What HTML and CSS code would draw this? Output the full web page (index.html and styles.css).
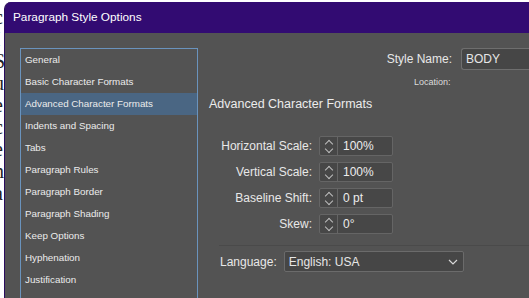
FILE: index.html
```html
<!DOCTYPE html>
<html lang="en">
<head>
    <meta charset="UTF-8">
    <title>Paragraph Style Options</title>
    <link rel="stylesheet" href="styles.css">
</head>
<body>
    <div class="doc">
        <p>c</p><p>I</p><p>S</p><p>u</p><p>e</p><p>c</p><p>e</p><p>n</p><p>a</p>
    </div>

    <div class="dialog">
        <div class="titlebar">Paragraph Style Options</div>

        <div class="dialog-body">
            <ul class="nav-list">
                <li>General</li>
                <li>Basic Character Formats</li>
                <li class="active">Advanced Character Formats</li>
                <li>Indents and Spacing</li>
                <li>Tabs</li>
                <li>Paragraph Rules</li>
                <li>Paragraph Border</li>
                <li>Paragraph Shading</li>
                <li>Keep Options</li>
                <li>Hyphenation</li>
                <li>Justification</li>
                <li>Span Columns</li>
            </ul>

            <div class="panel">
                <div class="name-row">
                    <span class="label">Style Name:</span>
                    <div class="text-input">BODY</div>
                </div>
                <div class="location">Location:</div>
                <h2 class="panel-title">Advanced Character Formats</h2>

                <div class="fields">
                    <div class="field-row">
                        <span class="label">Horizontal Scale:</span>
                        <div class="spin-input">
                            <span class="spin"><i class="up"></i><i class="down"></i></span>
                            <span class="value">100%</span>
                        </div>
                    </div>
                    <div class="field-row">
                        <span class="label">Vertical Scale:</span>
                        <div class="spin-input">
                            <span class="spin"><i class="up"></i><i class="down"></i></span>
                            <span class="value">100%</span>
                        </div>
                    </div>
                    <div class="field-row">
                        <span class="label">Baseline Shift:</span>
                        <div class="spin-input">
                            <span class="spin"><i class="up"></i><i class="down"></i></span>
                            <span class="value">0 pt</span>
                        </div>
                    </div>
                    <div class="field-row">
                        <span class="label">Skew:</span>
                        <div class="spin-input">
                            <span class="spin"><i class="up"></i><i class="down"></i></span>
                            <span class="value">0°</span>
                        </div>
                    </div>
                </div>

                <div class="language-row">
                    <span class="label">Language:</span>
                    <div class="select">
                        <span>English: USA</span>
                        <svg width="10" height="6" viewBox="0 0 10 6"><path d="M1 1 L5 5 L9 1" fill="none" stroke="#d8d8d8" stroke-width="1.2"/></svg>
                    </div>
                </div>
            </div>
        </div>
    </div>
</body>
</html>
```

FILE: styles.css
```css
* {
    margin: 0;
    padding: 0;
    box-sizing: border-box;
}

body {
    display: flex;
    width: 529px;
    height: 298px;
    overflow: hidden;
    background-color: #ffffff;
    font-family: "Liberation Sans", Arial, sans-serif;
    color: #e6e6e6;
}

/* document page peeking out behind the dialog */
.doc {
    width: 4px;
    flex-shrink: 0;
    overflow: hidden;
    padding-top: 6px;
    font-family: "Liberation Serif", serif;
    font-size: 20px;
    color: #222;
    line-height: 22px;
    text-indent: -6px;
}

.dialog {
    flex: 1;
    margin-top: 2px;
    display: flex;
    flex-direction: column;
    background-color: #535353;
    border-left: 1px solid #2a0b5e;
    border-top-left-radius: 7px;
    overflow: hidden;
}

.titlebar {
    height: 31px;
    flex-shrink: 0;
    background-color: #320b72;
    color: #ffffff;
    font-size: 11.8px;
    line-height: 31px;
    padding-left: 8px;
}

.dialog-body {
    display: flex;
    padding: 15px 0 0 15px;
}

.nav-list {
    width: 178px;
    height: 260px;
    list-style: none;
    border: 1px solid #6a93bd;
    border-bottom: none;
    flex-shrink: 0;
}

.nav-list li {
    height: 22px;
    line-height: 22px;
    padding-left: 4px;
    font-size: 9.8px;
    color: #ececec;
    white-space: nowrap;
}

.nav-list li.active {
    background-color: #4a6683;
}

.panel {
    flex: 1;
    padding-left: 11px;
}

.label {
    font-size: 12px;
    color: #e8e8e8;
    white-space: nowrap;
}

.name-row {
    display: flex;
    align-items: center;
    justify-content: flex-end;
    gap: 9px;
    margin-right: -8px;
}

.text-input {
    width: 76px;
    height: 22px;
    line-height: 20px;
    padding-left: 4px;
    font-size: 12px;
    background-color: #464646;
    border: 1px solid #6e6e6e;
    border-right: none;
    border-radius: 3px 0 0 3px;
}

.location {
    font-size: 9px;
    color: #dcdcdc;
    margin-top: 7px;
    padding-left: 205px;
}

.panel-title {
    font-weight: normal;
    font-size: 12.5px;
    color: #ececec;
    margin-top: 10px;
}

.fields {
    display: flex;
    flex-direction: column;
    gap: 6px;
    margin-top: 25px;
    margin-left: 10px;
    padding-bottom: 11px;
    border-bottom: 1px solid #4a4a4a;
}

.field-row {
    display: flex;
    align-items: center;
    justify-content: flex-end;
    gap: 7px;
    width: 174px;
    height: 20px;
}

.spin-input {
    display: flex;
    width: 74px;
    height: 20px;
    background-color: #474747;
    border: 1px solid #656565;
    border-radius: 2px;
}

.spin {
    width: 18px;
    border-right: 1px solid #656565;
    display: flex;
    flex-direction: column;
    align-items: center;
    justify-content: center;
    gap: 3px;
}

.spin i {
    display: block;
    width: 6px;
    height: 6px;
    border-left: 1px solid #bdbdbd;
    border-top: 1px solid #bdbdbd;
}

.spin .up {
    transform: translateY(2px) rotate(45deg);
}

.spin .down {
    transform: translateY(-2px) rotate(225deg);
}

.value {
    font-size: 12px;
    line-height: 18px;
    padding-left: 5px;
    color: #ededed;
}

.language-row {
    display: flex;
    align-items: center;
    gap: 7px;
    margin-top: 5px;
    margin-left: 11px;
}

.select {
    width: 180px;
    height: 21px;
    display: flex;
    align-items: center;
    justify-content: space-between;
    padding: 0 5px 0 4px;
    font-size: 12px;
    background-color: #464646;
    border: 1px solid #6b6b6b;
    border-radius: 2px;
}
```
